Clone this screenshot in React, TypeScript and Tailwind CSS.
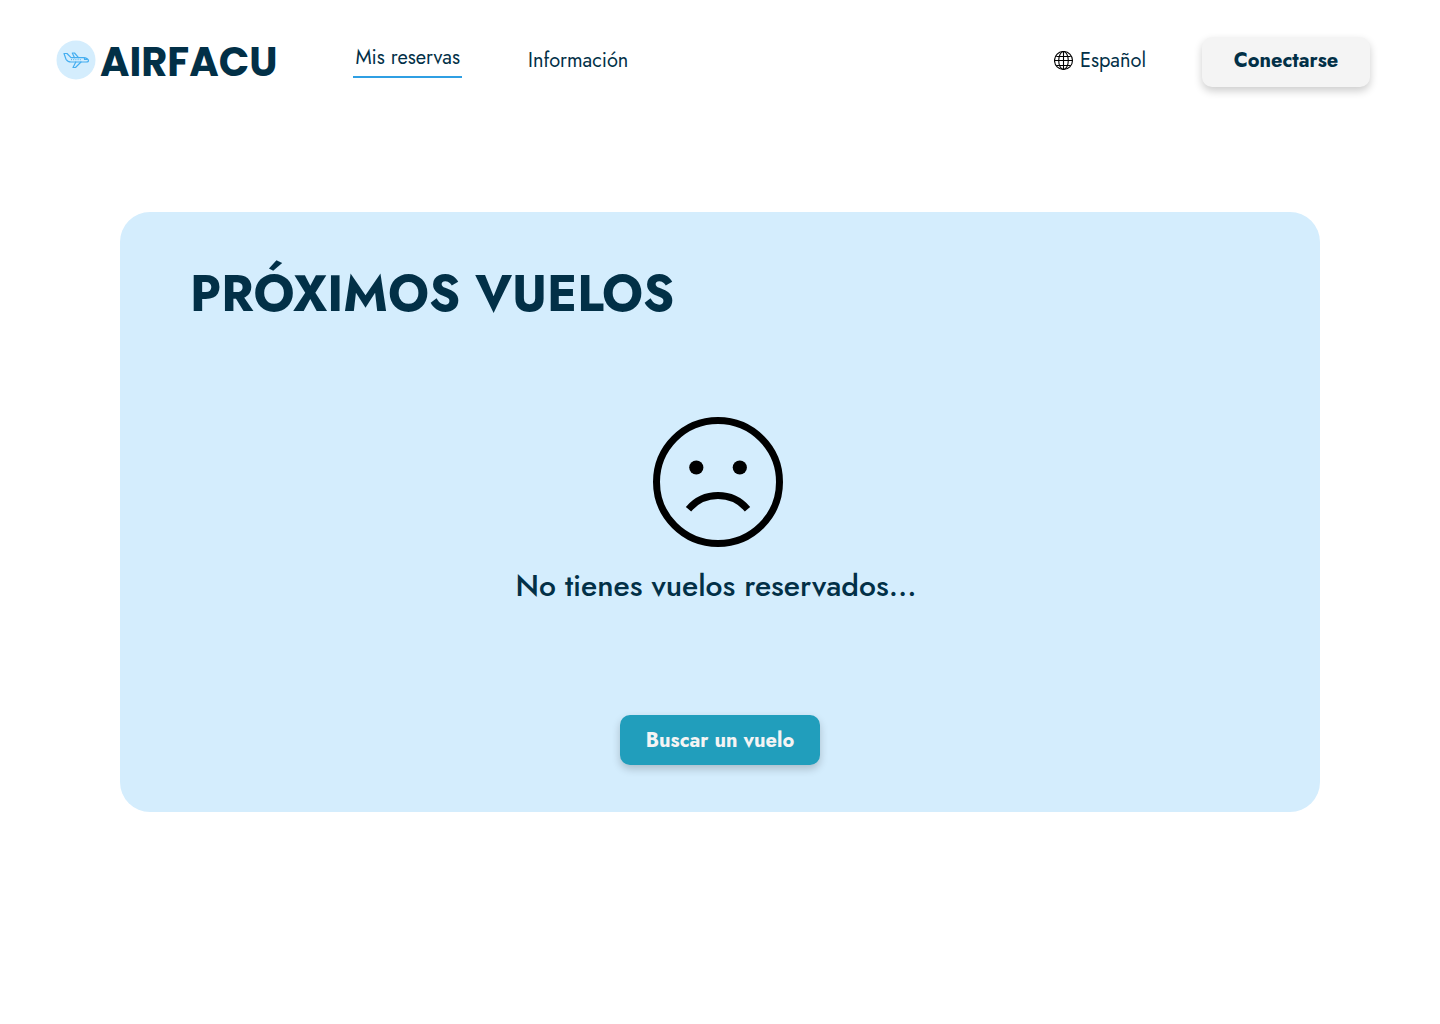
function LogoMark() {
  return (
    <svg viewBox="0 0 40 40" className="mb-1 size-10 shrink-0" fill="none" aria-hidden="true">
      <circle cx="20" cy="20" r="19.5" fill="#d4edfd" />
      <g stroke="#45aef0" strokeWidth="1.2" strokeLinejoin="round" strokeLinecap="round">
        <path d="M8 13.500h3l4 4.200h12.500c2.500 0 5 1.500 5 3 0 1-1 1.300-2.500 1.300H15c-2.500 0-4-.8-5-2.800z" />
        <path d="M22.500 17.700l-4-4.700h-2.200l2.200 4.700" />
        <path d="M25 22l-5.500 5.500h-2.500l2.800-5.500" />
        <path d="M28.500 18v1.500h2.500" />
      </g>
      <path d="M15 19.700h11" stroke="#45aef0" strokeDasharray="1 1.2" />
    </svg>
  );
}

function GlobeIcon() {
  return (
    <svg viewBox="0 0 20 20" className="size-5 shrink-0" fill="none" stroke="#000" strokeWidth="1.1" aria-hidden="true">
      <circle cx="9.500" cy="9.500" r="9" />
      <ellipse cx="9.500" cy="9.500" rx="4.800" ry="9" />
      <path d="M9.500 .5v18M.5 9.500h18M2.300 5.500h14.400M2.300 14.500h14.400" />
    </svg>
  );
}

function SadFace() {
  return (
    <svg viewBox="0 0 130 130" className="mr-1 size-[130px]" fill="none" stroke="#000" strokeWidth="7" aria-hidden="true">
      <circle cx="65" cy="65" r="61.500" />
      <path d="M35.500 92.200a38.700 38.700 0 0 1 59 0" />
      <circle cx="43.300" cy="50.500" r="7.100" fill="#000" stroke="none" />
      <circle cx="86.800" cy="50.500" r="7.100" fill="#000" stroke="none" />
    </svg>
  );
}

export default function App() {
  return (
    <div className="min-h-screen bg-white font-['Jost','Lato',sans-serif] text-[#023047]">
      <header className="flex items-center pt-9 pr-[70px] pl-14 text-xl">
        <a href="#" className="flex items-center gap-1">
          <LogoMark />
          <span className="font-['Poppins','Inter',sans-serif] text-[40px] leading-[52px] font-bold">AIRFACU</span>
        </a>
        <nav className="mb-0.5 ml-[76px] flex items-center gap-[66px]">
          <a href="#" className="border-b-2 border-[#2f9fe3] px-0.5 pb-1">
            Mis reservas
          </a>
          <a href="#">Información</a>
        </nav>
        <div className="ml-auto flex items-center gap-14">
          <button type="button" className="mb-0.5 flex items-center gap-1.5">
            <GlobeIcon />
            Español
          </button>
          <button
            type="button"
            className="h-[50px] w-[168px] rounded-[10px] bg-[#f4f4f4] pb-0.5 font-bold shadow-[0_4px_8px_rgba(0,0,0,0.2)]"
          >
            Conectarse
          </button>
        </div>
      </header>

      <main className="px-[120px] pt-[124px]">
        <section className="flex flex-col items-center rounded-[30px] bg-[#d4edfd] px-[70px] pt-[50px] pb-[47px]">
          <h1 className="self-start text-[50px] leading-[64px] font-bold">PRÓXIMOS VUELOS</h1>
          <div className="mt-[91px] flex flex-col items-center">
            <SadFace />
            <p className="mt-[19px] mr-2 text-[30px] leading-10 font-medium">No tienes vuelos reservados...</p>
          </div>
          <button
            type="button"
            className="mt-[109px] h-[50px] w-[200px] rounded-[10px] bg-[#219ebc] pt-0.5 text-xl font-bold text-[#f4f4f4] shadow-[0_4px_8px_rgba(0,0,0,0.2)]"
          >
            Buscar un vuelo
          </button>
        </section>
      </main>
    </div>
  );
}
